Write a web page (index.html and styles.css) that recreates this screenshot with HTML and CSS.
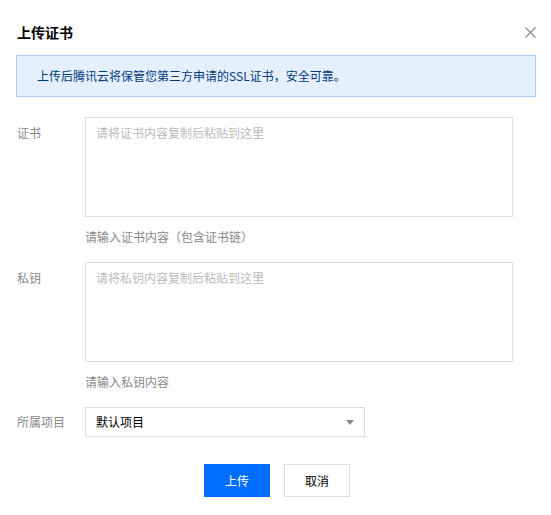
FILE: index.html
```html
<!DOCTYPE html>
<html lang="zh-CN">
<head>
<meta charset="utf-8">
<title>上传证书</title>
<link rel="stylesheet" href="styles.css">
</head>
<body>
<div class="dialog">
  <div class="header">
    <h3 class="title">上传证书</h3>
    <span class="close" aria-label="关闭">
      <svg width="11" height="11" viewBox="0 0 11 11"><path d="M0.5 0.5L10.5 10.5M10.5 0.5L0.5 10.5" stroke="#8a8a8a" stroke-width="1.2" fill="none"/></svg>
    </span>
  </div>
  <div class="alert">上传后腾讯云将保管您第三方申请的SSL证书，安全可靠。</div>
  <div class="form">
    <div class="row">
      <div class="label">证书</div>
      <div class="field">
        <div class="textarea"><span class="placeholder">请将证书内容复制后粘贴到这里</span></div>
        <div class="hint">请输入证书内容（包含证书链）</div>
      </div>
    </div>
    <div class="row">
      <div class="label">私钥</div>
      <div class="field">
        <div class="textarea"><span class="placeholder">请将私钥内容复制后粘贴到这里</span></div>
        <div class="hint">请输入私钥内容</div>
      </div>
    </div>
    <div class="row row-select">
      <div class="label">所属项目</div>
      <div class="field">
        <div class="select">
          <span>默认项目</span>
          <svg class="caret" width="8" height="5" viewBox="0 0 8 5"><path d="M0 0H8L4 5Z" fill="#888"/></svg>
        </div>
      </div>
    </div>
  </div>
  <div class="actions">
    <button class="btn btn-primary">上传</button>
    <button class="btn">取消</button>
  </div>
</div>
</body>
</html>
```

FILE: styles.css
```css
* { box-sizing: border-box; }
html, body { margin: 0; padding: 0; background: #fff; }
body {
  font-family: "Noto Sans CJK SC", "Liberation Sans", sans-serif;
  font-size: 12px;
  color: #000;
}
.dialog {
  width: 551px;
  padding: 22px 15px 0 16px;
}
.header {
  display: flex;
  justify-content: space-between;
  align-items: center;
  height: 20px;
}
.title {
  margin: 0 0 0 1px;
  font-size: 14px;
  font-weight: bold;
  line-height: 20px;
  color: #000;
}
.close {
  display: flex;
  width: 11px;
  height: 11px;
  margin-right: 0;
}
.alert {
  margin-top: 13px;
  height: 42px;
  padding: 0 20px;
  line-height: 40px;
  background: #e5f0ff;
  border: 1px solid #a8cdf7;
  color: #003b80;
}
.form {
  margin-top: 20px;
  display: flex;
  flex-direction: column;
  gap: 15px;
}
.row {
  display: grid;
  grid-template-columns: 69px 428px;
}
.label {
  color: #888;
  line-height: 18px;
  padding-top: 7px;
  padding-left: 1px;
}
.textarea {
  height: 100px;
  border: 1px solid #ddd;
  padding: 6px 10px;
  line-height: 18px;
}
.placeholder { color: #bbb; }
.hint {
  margin-top: 10px;
  line-height: 20px;
  color: #888;
}
.row-select { grid-template-columns: 69px 280px; }
.row-select .label { padding-top: 6px; }
.select {
  height: 30px;
  border: 1px solid #ddd;
  padding: 0 10px;
  display: flex;
  align-items: center;
  justify-content: space-between;
  line-height: 28px;
  color: #000;
}
.caret { margin-right: 0; }
.actions {
  margin-top: 27px;
  display: flex;
  justify-content: center;
  gap: 14px;
  padding-left: 2px;
}
.btn {
  width: 66px;
  height: 33px;
  border: 1px solid #ddd;
  background: #fff;
  color: #000;
  font-family: inherit;
  font-size: 12px;
  padding: 0;
}
.btn-primary {
  background: #006eff;
  border-color: #006eff;
  color: #fff;
}
```
